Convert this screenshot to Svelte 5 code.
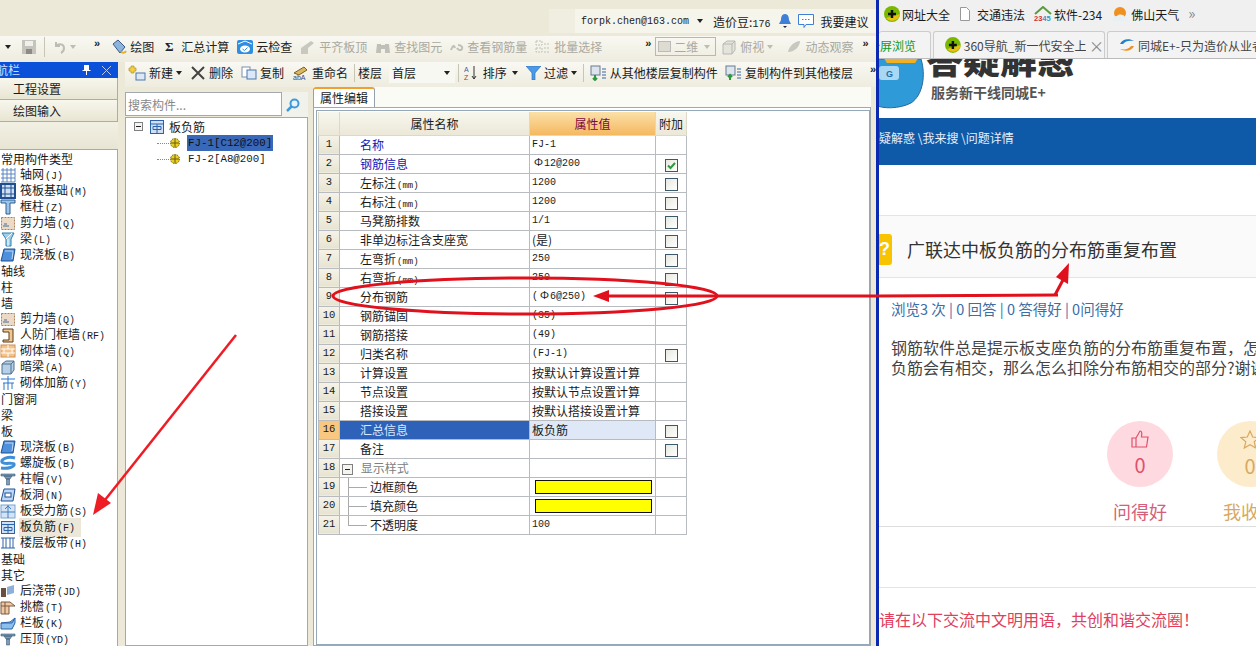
<script>
  const sideItems = [
    { t: '常用构件类型' },
    { t: '轴网', k: '(J)', i: 'grid' },
    { t: '筏板基础', k: '(M)', i: 'raft' },
    { t: '框柱', k: '(Z)', i: 'column' },
    { t: '剪力墙', k: '(Q)', i: 'wall' },
    { t: '梁', k: '(L)', i: 'beam' },
    { t: '现浇板', k: '(B)', i: 'slab' },
    { t: '轴线' },
    { t: '柱' },
    { t: '墙' },
    { t: '剪力墙', k: '(Q)', i: 'wall' },
    { t: '人防门框墙', k: '(RF)', i: 'door' },
    { t: '砌体墙', k: '(Q)', i: 'brick' },
    { t: '暗梁', k: '(A)', i: 'box' },
    { t: '砌体加筋', k: '(Y)', i: 'rebar' },
    { t: '门窗洞' },
    { t: '梁' },
    { t: '板' },
    { t: '现浇板', k: '(B)', i: 'slab' },
    { t: '螺旋板', k: '(B)', i: 'spiral' },
    { t: '柱帽', k: '(V)', i: 'cap' },
    { t: '板洞', k: '(N)', i: 'hole' },
    { t: '板受力筋', k: '(S)', i: 'force' },
    { t: '板负筋', k: '(F)', i: 'neg', active: true },
    { t: '楼层板带', k: '(H)', i: 'band' },
    { t: '基础' },
    { t: '其它' },
    { t: '后浇带', k: '(JD)', i: 'post' },
    { t: '挑檐', k: '(T)', i: 'eave' },
    { t: '栏板', k: '(K)', i: 'rail' },
    { t: '压顶', k: '(YD)', i: 'cap' }
  ];

  const rows = [
    { name: '名称', value: 'FJ-1', blue: true },
    { name: '钢筋信息', value: '12@200', phi: true, blue: true, check: 'on' },
    { name: '左标注', unit: '(mm)', value: '1200', check: 'off' },
    { name: '右标注', unit: '(mm)', value: '1200', check: 'off' },
    { name: '马凳筋排数', value: '1/1', check: 'off' },
    { name: '非单边标注含支座宽', value: '(是)', cn: true, check: 'off' },
    { name: '左弯折', unit: '(mm)', value: '250', check: 'off' },
    { name: '右弯折', unit: '(mm)', value: '250', check: 'off' },
    { name: '分布钢筋', value: '6@250)', pre: '(', phi: true, check: 'off' },
    { name: '钢筋锚固', value: '(35)' },
    { name: '钢筋搭接', value: '(49)' },
    { name: '归类名称', value: '(FJ-1)', check: 'off' },
    { name: '计算设置', value: '按默认计算设置计算', cn: true },
    { name: '节点设置', value: '按默认节点设置计算', cn: true },
    { name: '搭接设置', value: '按默认搭接设置计算', cn: true },
    { name: '汇总信息', value: '板负筋', cn: true, selected: true, check: 'off' },
    { name: '备注', value: '', check: 'off' },
    { name: '显示样式', value: '', group: true },
    { name: '边框颜色', swatch: true, child: true },
    { name: '填充颜色', swatch: true, child: true },
    { name: '不透明度', value: '100', child: true, last: true }
  ];
</script>

{#snippet icon(name)}
  <svg class="ic" viewBox="0 0 16 16" width="16" height="16">
    {#if name === 'grid'}
      <path d="M1 3h14M1 7h14M1 11h14M1 15h14M3 1v14M7 1v14M11 1v14M15 1v14" stroke="#5a86c0" fill="none"/>
    {:else if name === 'raft'}
      <rect x="1" y="1" width="14" height="14" fill="#cfe0f4" stroke="#1f4f90" stroke-width="2"/>
      <path d="M5 1v14M11 1v14M1 5h14M1 11h14" stroke="#1f4f90"/>
    {:else if name === 'column'}
      <path d="M1 1h14v3H10v11H6V4H1z" fill="#9cc4ea" stroke="#2f5f90"/>
    {:else if name === 'wall'}
      <rect x="1.5" y="2.5" width="13" height="12" fill="#ecd9c6" stroke="#a9825a" stroke-dasharray="2 1"/>
      <path d="M3 11h6M4 9h3" stroke="#9aa4b0" stroke-width="2"/>
    {:else if name === 'beam'}
      <path d="M2 2h12l-3 6v7H6V8z" fill="#9fd0ee" stroke="#2f7fa8"/>
      <path d="M6 8l6-6M8 15V8" stroke="#fff"/>
    {:else if name === 'slab'}
      <path d="M4 2h11l-2 12H1z" fill="#4f90dc" stroke="#1f4f90"/>
      <path d="M5 4h8l-1 8" stroke="#bcd8f6" fill="none"/>
    {:else if name === 'door'}
      <path d="M3 2h10v13H3v-2h6V5H3z" fill="#f2c890" stroke="#5a3a18"/>
    {:else if name === 'brick'}
      <rect x="1" y="2" width="14" height="12" fill="#f4c48c" stroke="#d09050"/>
      <path d="M1 6h14M1 10h14M8 2v4M4 6v4M12 6v4M8 10v4" stroke="#fff"/>
    {:else if name === 'box'}
      <path d="M2 5l4-3h8v9l-3 4H2z" fill="#b6d0e8" stroke="#50708c"/>
      <path d="M2 5h9v10M11 5l3-3" stroke="#50708c" fill="none"/>
    {:else if name === 'rebar'}
      <path d="M1 4h14M8 1v14M3 8h11M4 8v7M12 8v6" stroke="#2a78c8" fill="none"/>
    {:else if name === 'spiral'}
      <path d="M15 3C8 1 1 4 2 7c1 3 11 0 12 2 1 3-6 5-13 4" stroke="#3f8ed8" stroke-width="3" fill="none"/>
    {:else if name === 'cap'}
      <path d="M1 3h14v2H1zM4 5h8l-2 3H6zM6.5 8h3v6h-3z" fill="#7e9cb8" stroke="#3a5a78" stroke-width=".6"/>
    {:else if name === 'hole'}
      <path d="M4 2h11l-2 12H1z" fill="#bcd8f6" stroke="#1f4f90"/>
      <rect x="5" y="6" width="6" height="4" fill="#fff" stroke="#1f4f90"/>
    {:else if name === 'force'}
      <rect x="1" y="2" width="14" height="13" fill="#d4e4f6" stroke="#7ea6d0"/>
      <path d="M8 2v13M1 9h14M5 6l3-3 3 3" stroke="#3f7ec0" fill="none"/>
    {:else if name === 'neg'}
      <rect x="1.5" y="2.5" width="13" height="12" fill="#cfe0f6" stroke="#2c62a8"/>
      <path d="M1.5 5.500h13M8 5.500v9M4 8.500h8v3H4z" stroke="#2c62a8" fill="none"/>
    {:else if name === 'band'}
      <path d="M1 3h14M1 13h14M3 3v10M6 3v10M10 3v10M13 3v10" stroke="#2c62a8" fill="none"/>
    {:else if name === 'post'}
      <rect x="1" y="5" width="5" height="9" fill="#6a5040"/>
      <path d="M7 4l7-2v8l-7 2z" fill="#8cb0d8"/>
    {:else if name === 'eave'}
      <path d="M1 3h9l5 4H9v8H1z" fill="#f0c8a4" stroke="#7a5a40"/>
      <path d="M1 7h8M5 3v12" stroke="#7a5a40"/>
    {:else if name === 'rail'}
      <path d="M1 8l9-1 5-4v5l-3 6H1z" fill="#8cc0ec" stroke="#2c62a8"/>
      <path d="M1 8h11l3-5" stroke="#2c62a8" fill="none"/>
    {/if}
  </svg>
{/snippet}

{#snippet caret()}
  <span class="caret"></span>
{/snippet}

<div class="screen">
  <div class="app">
    <div class="titlebar">
      <div class="account-gap"></div>
      <div class="account">
        <span class="mono">forpk.chen@163.com</span>
        {@render caret()}
        <span class="bean">造价豆:<span class="mono">176</span></span>
        <svg width="14" height="16" viewBox="0 0 14 16"><path d="M7 1c3 0 4 3 4 6l2 4H1l2-4c0-3 1-6 4-6z" fill="#3f7fd8"/><path d="M5 13h4l-2 2z" fill="#224"/></svg>
        <svg width="18" height="16" viewBox="0 0 18 16"><path d="M1.5 1.500h15v10H9l-2 3v-3H1.500z" fill="#fff" stroke="#3f7fd8"/><path d="M5 6.500h8" stroke="#3f7fd8" stroke-dasharray="1.500 1.500"/></svg>
        <span>我要建议</span>
      </div>
    </div>

    <div class="toolbar main-tools">
      {@render caret()}
      <svg class="tool save" width="16" height="16" viewBox="0 0 16 16"><rect x="1" y="1" width="14" height="14" fill="#c4c4bc"/><rect x="4" y="2" width="8" height="5" fill="#f0f0ea"/><rect x="5" y="10" width="6" height="5" fill="#8c8c86"/></svg>
      <span class="sep"></span>
      <svg class="tool undo" width="14" height="14" viewBox="0 0 14 14"><path d="M3 2v4h4M3 6c3-3 8-2 8 2 0 2-1 4-3 5" stroke="#bdbdb5" stroke-width="2" fill="none"/></svg>
      <span class="caret dim"></span>
      <span class="more first-more">»</span>
      <span class="tb"><svg width="16" height="16" viewBox="0 0 16 16"><path d="M2 5l5-4 7 7-5 6z" fill="#8cb4dc" stroke="#3a5a88"/><path d="M10 13c2 1 4 1 5-1" stroke="#e8b020" stroke-width="2" fill="none"/></svg>绘图</span>
      <span class="tb"><b class="sigma">Σ</b>汇总计算</span>
      <span class="tb"><svg width="16" height="16" viewBox="0 0 16 16"><rect x="0" y="1" width="16" height="14" rx="2" fill="#2f8ee0"/><path d="M1 5l7-3 7 3" stroke="#fff" fill="none"/><ellipse cx="8" cy="10" rx="5" ry="3.500" fill="#fff"/><path d="M5.500 10l2 1.500 3-3" stroke="#2f8ee0" fill="none"/></svg>云检查</span>
      <span class="tb off"><svg width="16" height="16" viewBox="0 0 16 16"><path d="M1 9l10-7 3 2-6 5v6H1z" fill="#c8c8c0"/></svg>平齐板顶</span>
      <span class="tb off"><svg width="16" height="16" viewBox="0 0 16 16"><path d="M2 5h4v9H1zM10 5h4l1 9h-5zM6 6h4v4H6z" fill="#c0c0b8"/></svg>查找图元</span>
      <span class="tb off"><svg width="14" height="12" viewBox="0 0 14 12"><path d="M1 9c2-5 3-5 4-2M8 4c3 0 5 2 4 4s-4 1-5-1" stroke="#c0c0b8" stroke-width="2" fill="none"/></svg>查看钢筋量</span>
      <span class="tb off"><svg width="16" height="16" viewBox="0 0 16 16"><path d="M1 2h6v4H1zM9 5h6M9 9h6M9 13h6M1 9h6v4H1z" fill="none" stroke="#c0c0b8" stroke-dasharray="2 1"/></svg>批量选择</span>
      <span class="more mid-more">»</span>
      <span class="combo off"><span class="swatch-2d"></span>二维<span class="caret dim"></span></span>
      <span class="tb off view"><svg width="16" height="16" viewBox="0 0 16 16"><path d="M2 5l4-3h8v9l-3 4H2zM2 5h9v10M11 5l3-3" fill="#e4e4dc" stroke="#b8b8b0"/></svg>俯视<span class="caret dim"></span></span>
      <span class="tb off"><svg width="16" height="16" viewBox="0 0 16 16"><path d="M2 13C3 7 9 2 14 2c0 5-5 11-12 11z" fill="#c8c8c0"/></svg>动态观察</span>
      <span class="more end-more">»</span>
    </div>

    <div class="workspace">
      <aside class="side">
        <div class="side-title"><span class="clip">导航栏</span>
          <span class="pin">
            <svg width="9" height="10" viewBox="0 0 9 10"><path d="M2 0h5v5h1.500v1H5v4H4V6H.5V5H2z" fill="#fff"/></svg>
            <svg width="9" height="9" viewBox="0 0 9 9"><path d="M0 0l9 9M9 0L0 9" stroke="#b8c8f0"/></svg>
          </span>
        </div>
        <div class="side-btn">工程设置</div>
        <div class="side-btn">绘图输入</div>
        <div class="side-blank"></div>
        <div class="side-list">
          {#each sideItems as it}
            <div class="side-item" class:has-icon={it.i} class:active={it.active}>
              {#if it.i}{@render icon(it.i)}{/if}
              <span class="side-label">{it.t}{#if it.k}<span class="mono key">{it.k}</span>{/if}</span>
            </div>
          {/each}
        </div>
      </aside>

      <main class="content">
        <div class="toolbar sub-tools">
          <span class="tb"><svg width="18" height="16" viewBox="0 0 18 16"><path d="M3 1h3v2h2v3H6v2H3V6H1V3h2z" fill="#f0d040" stroke="#a88820" stroke-width=".6"/><rect x="8" y="8" width="9" height="7" fill="#dce8f6" stroke="#4a78b0"/></svg>新建{@render caret()}</span>
          <span class="tb m8"><svg class="x-ic" width="14" height="14" viewBox="0 0 14 14"><path d="M1 1l12 12M13 1L1 13" stroke="#444" stroke-width="2"/></svg>删除</span>
          <span class="tb m9"><svg width="16" height="14" viewBox="0 0 16 14"><rect x="1" y="1" width="8" height="10" fill="#fff" stroke="#7a90b0"/><rect x="6" y="4" width="9" height="9" fill="#dce8f6" stroke="#4a78b0"/></svg>复制</span>
          <span class="tb"><svg width="16" height="16" viewBox="0 0 16 16"><path d="M1 8l10-6 3 3-8 5z" fill="#d8b860" stroke="#806020"/><text x="0" y="15" font-size="7" fill="#447" font-family="Liberation Sans">abA</text></svg>重命名</span>
          <span class="vsep"></span>
          <span class="floor-label">楼层</span>
          <span class="floor-select">首层<span class="caret"></span></span>
          <span class="vsep"></span>
          <span class="tb sort"><svg width="14" height="16" viewBox="0 0 14 16"><text x="0" y="7" font-size="7" fill="#3a62a8" font-family="Liberation Sans">A</text><text x="0" y="15" font-size="7" fill="#a04040" font-family="Liberation Sans">Z</text><path d="M10 1v13M8 11l2 3 2-3" stroke="#333" fill="none"/></svg>排序{@render caret()}</span>
          <span class="tb m3"><svg width="15" height="14" viewBox="0 0 15 14"><path d="M0 0h15L9 7v7H6V7z" fill="#4a9ae8" stroke="#2a6ab0" stroke-width=".6"/></svg>过滤{@render caret()}</span>
          <span class="vsep"></span>
          <span class="tb copy-from"><svg width="17" height="16" viewBox="0 0 17 16"><rect x="1" y="1" width="9" height="9" fill="#dce4ee" stroke="#6a7a90"/><path d="M5 10v5M3 13l2 2 2-2" stroke="#2a9a3a" stroke-width="2" fill="none"/><path d="M12 4h4M12 7h4M12 10h4M12 13h4" stroke="#3a62a8"/></svg>从其他楼层复制构件</span>
          <span class="tb"><svg width="17" height="16" viewBox="0 0 17 16"><rect x="1" y="1" width="9" height="9" fill="#dce4ee" stroke="#6a7a90"/><path d="M5 10v5M3 12l2-2 2 2" stroke="#2a9a3a" stroke-width="2" fill="none"/><path d="M12 4h4M12 7h4M12 10h4M12 13h4" stroke="#3a62a8"/></svg>复制构件到其他楼层</span>
          <span class="more sub-more">»</span>
        </div>

        <div class="panes">
          <section class="tree-pane">
            <div class="search">
              <input class="search-input" placeholder="搜索构件..." />
              <span class="search-btn">
                <svg width="16" height="16" viewBox="0 0 16 16"><circle cx="9.500" cy="6.500" r="4" fill="#e8f4fc" stroke="#3f9ad8" stroke-width="2"/><path d="M6.500 9.500L2 14" stroke="#3f9ad8" stroke-width="2.500"/></svg>
              </span>
            </div>
            <div class="tree">
              <div class="tree-root">
                <span class="minus"></span>
                <svg width="14" height="14" viewBox="0 0 14 14"><rect x=".5" y=".5" width="13" height="13" fill="#cfe0f6" stroke="#2c62a8"/><path d="M.5 4h13M7 4v9.500M3 6.500h8v3H3z" stroke="#2c62a8" fill="none"/></svg>
                <span class="tree-name">板负筋</span>
              </div>
              {#each ['FJ-1[C12@200]', 'FJ-2[A8@200]'] as leaf, n}
                <div class="tree-leaf">
                  <span class="dots"></span>
                  <svg width="10" height="10" viewBox="0 0 10 10"><circle cx="5" cy="5" r="4.500" fill="#e8d020" stroke="#6a5a10" stroke-dasharray="1.500 1"/><path d="M1 5h8M5 1v8" stroke="#6a5a10"/></svg>
                  <span class="mono leaf-name" class:picked={n === 0}>{leaf}</span>
                </div>
              {/each}
            </div>
          </section>

          <section class="prop-pane">
            <div class="tabstrip"><span class="tab">属性编辑</span></div>
            <div class="tab-body">
              <div class="grid-box">
                <table>
                  <colgroup><col class="c-no" /><col class="c-name" /><col class="c-val" /><col class="c-add" /></colgroup>
                  <thead>
                    <tr><th></th><th>属性名称</th><th class="val-head">属性值</th><th>附加</th></tr>
                  </thead>
                  <tbody>
                    {#each rows as r, n}
                      <tr class:selected={r.selected}>
                        <td class="no mono">{n + 1}</td>
                        <td class="name" class:blue={r.blue} class:group={r.group} class:child={r.child}>
                          {#if r.group}<span class="minus small"></span>{/if}
                          {#if r.child}<span class="branch" class:end={r.last}></span>{/if}
                          {r.name}{#if r.unit}<span class="mono unit">{r.unit}</span>{/if}
                        </td>
                        <td class="val" class:cn={r.cn}>
                          {#if r.swatch}<div class="yellow"></div>{:else}{r.pre || ''}{#if r.phi}<span class="phi">Ф</span>{/if}{r.value}{/if}
                        </td>
                        <td class="add">
                          {#if r.check}
                            <span class="check">
                              {#if r.check === 'on'}<svg width="11" height="11" viewBox="0 0 11 11"><path d="M2 5.500l2.500 2.500L9 3" stroke="#2a9a3a" stroke-width="2" fill="none"/></svg>{/if}
                            </span>
                          {/if}
                        </td>
                      </tr>
                    {/each}
                  </tbody>
                </table>
              </div>
            </div>
          </section>
        </div>
      </main>
    </div>
  </div>

  <div class="divider"></div>

  <div class="browser">
    <div class="bookmarks">
      <span class="bm"><svg width="16" height="16" viewBox="0 0 16 16"><circle cx="8" cy="8" r="8" fill="#7ab800"/><path d="M2 12a8 8 0 0 0 14-4z" fill="#e8c010"/><path d="M8 4v8M4 8h8" stroke="#111" stroke-width="2.500"/></svg>网址大全</span>
      <span class="bm doc"><svg width="12" height="14" viewBox="0 0 12 14"><path d="M1.500.5h6l3 3v10h-9z" fill="#fff" stroke="#999"/></svg>交通违法</span>
      <span class="bm"><svg width="18" height="16" viewBox="0 0 18 16"><path d="M1 8l8-7 8 7" stroke="#5a9a40" stroke-width="2" fill="none"/><text x="0" y="15" font-size="7.500" font-weight="700" font-family="Liberation Sans" fill="#c33">23<tspan fill="#39c">45</tspan></text></svg>软件-234</span>
      <span class="bm"><svg width="18" height="16" viewBox="0 0 18 16"><circle cx="9" cy="7" r="6" fill="#f09020"/><path d="M1 15c0-4 3-5 5-5 2-2 6-2 8 1 3 0 3 4 3 4z" fill="#e8f0f4"/></svg>佛山天气</span>
      <span class="bm-more">»</span>
    </div>
    <div class="tabs">
      <span class="btab green"><span class="clip-left">全屏浏览</span></span>
      <span class="btab mid"><svg width="16" height="16" viewBox="0 0 16 16"><circle cx="8" cy="8" r="8" fill="#7ab800"/><path d="M2 12a8 8 0 0 0 14-4z" fill="#e8c010"/><path d="M8 4v8M4 8h8" stroke="#111" stroke-width="2.500"/></svg><span class="tabtxt">360导航_新一代安全上</span><span class="x">×</span></span>
      <span class="btab last"><svg width="16" height="14" viewBox="0 0 16 14"><path d="M1 6C3 1 10 0 15 3 10 2 6 3 4 6z" fill="#1f7fc8"/><path d="M15 8c-2 5-9 6-14 3 5 1 9 0 11-3z" fill="#f09020"/></svg>同城E+-只为造价从业者</span>
    </div>
    <div class="page">
      <div class="logo">
        <svg class="mascot" width="46" height="50" viewBox="0 0 46 50"><path d="M-4 0H42C47 16 44 36 32 44 20 50 4 50-4 46z" fill="#2e9ad8" stroke="#2a6a9a"/><path d="M4-2h36l-4 6H8z" fill="#f0b020"/><rect x="0" y="7" width="20" height="14" rx="3" fill="#a8d8f4"/><text x="7" y="18" font-size="9" font-weight="700" font-family="Liberation Sans" fill="#1f6fa8">G</text></svg>
        <div class="logo-text">
          <div class="logo-big">答疑解惑</div>
          <div class="logo-sub">服务新干线同城E+</div>
        </div>
      </div>
      <div class="crumbs"><span class="crumb-clip">答疑解惑</span> \我来搜 \问题详情</div>
      <div class="question">
        <span class="qmark">?</span>
        <h1>广联达中板负筋的分布筋重复布置</h1>
      </div>
      <div class="stats">浏览3 次 | 0 回答 | 0 答得好 | 0问得好</div>
      <div class="body-text">
        <p>钢筋软件总是提示板支座负筋的分布筋重复布置，怎么处理才能解决这个问题呢</p>
        <p>负筋会有相交，那么怎么扣除分布筋相交的部分?谢谢大家的帮助</p>
      </div>
      <div class="votes">
        <div class="vote pink">
          <span class="circle">
            <svg width="18" height="18" viewBox="0 0 18 18"><path d="M1 8h4v9H1zM5 8l4-7c2 0 2 2 1.500 6H17l-1.500 10H5" fill="none" stroke="currentColor" stroke-width="1.200"/></svg>
            <span class="count">0</span>
          </span>
          <span class="vote-label">问得好</span>
        </div>
        <div class="vote amber">
          <span class="circle">
            <svg width="20" height="19" viewBox="0 0 20 19"><path d="M10 1l2.700 6 6.300.6-4.800 4.200 1.500 6.200L10 14.700 4.300 18l1.500-6.200L1 7.600 7.300 7z" fill="none" stroke="currentColor" stroke-width="1.200"/></svg>
            <span class="count">0</span>
          </span>
          <span class="vote-label">我收藏</span>
        </div>
      </div>
      <div class="notice">请在以下交流中文明用语，共创和谐交流圈！</div>
    </div>
  </div>

  <svg class="marks" width="1256" height="646" viewBox="0 0 1256 646">
    <ellipse cx="525" cy="296" rx="192" ry="18" fill="none" stroke="#e0101c" stroke-width="3" />
    <path d="M236 335L101 505" stroke="#ee1c25" stroke-width="2.500" fill="none" />
    <path d="M93 515l5-22 13 10z" fill="#ee1c25" />
    <path d="M605 296H878L1058 295" stroke="#e0101c" stroke-width="3" fill="none" />
    <path d="M593 296l16-6v12z" fill="#e0101c" />
    <path d="M1055 295l9-17" stroke="#e0101c" stroke-width="3" fill="none" />
    <path d="M1069 263l-1 21-12-7z" fill="#e0101c" />
  </svg>
</div>

<style>
  :global(body) {
    margin: 0;
    overflow: hidden;
  }
  .screen {
    position: relative;
    display: flex;
    width: 1256px;
    height: 646px;
    overflow: hidden;
    background: #fff;
    font-family: "Noto Sans CJK SC", "Liberation Sans", sans-serif;
    font-size: 12px;
    color: #1a1a1a;
  }
  .mono {
    font-family: "Liberation Mono", "Noto Sans CJK SC", monospace;
  }
  .app {
    width: 876px;
    flex: none;
    display: flex;
    flex-direction: column;
    background: #ece9d8;
  }
  .titlebar {
    height: 36px;
    flex: none;
    display: flex;
    justify-content: flex-end;
    padding-top: 9px;
    box-sizing: border-box;
  }
  .account-gap {
    width: 26px;
    height: 24px;
    background: #f0eee0;
  }
  .account {
    width: 301px;
    height: 24px;
    padding: 0 6px;
    box-sizing: border-box;
    display: flex;
    align-items: center;
    gap: 5px;
    background: #f6f5ec;
    white-space: nowrap;
  }
  .account .mono {
    font-size: 10px;
  }
  .bean {
    margin: 0 3px 0 2px;
  }
  .caret {
    display: inline-block;
    width: 0;
    height: 0;
    border: 3px solid transparent;
    border-top: 4px solid #222;
    border-bottom: 0;
    margin: 0 3px;
  }
  .caret.dim {
    border-top-color: #bdbdb5;
  }
  .tb .caret {
    margin-left: 0;
  }
  .toolbar {
    display: flex;
    align-items: center;
    white-space: nowrap;
    background: linear-gradient(#f9f8f2, #eeecdf);
    overflow: hidden;
    box-sizing: border-box;
  }
  .main-tools {
    height: 26px;
    flex: none;
    padding: 0 0 5px 2px;
    color: #222;
  }
  .tool.save {
    margin-left: 7px;
  }
  .tool.undo {
    margin-left: 8px;
  }
  .sep {
    width: 1px;
    height: 20px;
    background: #c8c5b4;
    margin-left: 7px;
  }
  .more {
    font: 700 11px "Liberation Sans", sans-serif;
    margin-top: -8px;
    color: #222;
  }
  .first-more {
    margin-left: 15px;
    margin-right: 11px;
  }
  .mid-more {
    margin-left: 35px;
  }
  .end-more {
    margin-left: 1px;
  }
  .tb {
    display: inline-flex;
    align-items: center;
    gap: 3px;
    margin-right: 8px;
  }
  .tb.off {
    color: #aaa9a0;
  }
  .tb.view {
    margin-right: 10px;
  }
  .sigma {
    font: 700 13px "Liberation Serif", serif;
    width: 14px;
    text-align: center;
    margin-right: 2px;
  }
  .combo {
    display: inline-flex;
    align-items: center;
    gap: 3px;
    width: 61px;
    height: 19px;
    margin: 0 5px 0 4px;
    padding: 0 2px;
    box-sizing: border-box;
    border: 1px solid #b8b8b0;
    color: #aaa9a0;
  }
  .swatch-2d {
    width: 13px;
    height: 9px;
    background: #dedcd0;
    border: 1px solid #bbb;
  }
  .workspace {
    flex: 1;
    min-height: 0;
    display: flex;
  }
  .side {
    width: 118px;
    flex: none;
    display: flex;
    flex-direction: column;
  }
  .side-title {
    height: 16px;
    flex: none;
    display: flex;
    align-items: center;
    justify-content: space-between;
    background: #0a50d8;
    color: #cfe0ff;
    padding-right: 7px;
    overflow: hidden;
  }
  .clip {
    margin-left: -16px;
    line-height: 16px;
  }
  .pin {
    display: flex;
    align-items: center;
    gap: 11px;
  }
  .side-btn {
    height: 22px;
    flex: none;
    box-sizing: border-box;
    padding-left: 13px;
    line-height: 21px;
    border: 1px solid #b0ad9c;
    border-left: 0;
    border-top: 0;
    background: linear-gradient(#f8f7ee, #e8e5d2);
  }
  .side-blank {
    height: 27px;
    flex: none;
    background: linear-gradient(#f2f0e4, #e8e5d4);
  }
  .side-list {
    flex: 1;
    min-height: 0;
    background: #fff;
    border: 1px solid #a4a9b0;
    border-left: 0;
    border-bottom: 0;
    padding-top: 1px;
    overflow: hidden;
  }
  .side-item {
    height: 16px;
    line-height: 16px;
    display: flex;
    align-items: center;
    padding-left: 1px;
    white-space: nowrap;
  }
  .side-item.has-icon {
    padding-left: 0;
    gap: 4px;
  }
  .ic {
    flex: none;
  }
  .side-label {
    padding: 0 2px 0 0;
  }
  .side-item.active .side-label {
    background: #ebe8da;
    margin-left: -1px;
    padding: 0 3px 0 1px;
    width: 58px;
  }
  .key {
    font-size: 10px;
    margin-left: 1px;
  }
  .content {
    flex: 1;
    min-width: 0;
    margin-left: 7px;
    display: flex;
    flex-direction: column;
  }
  .sub-tools {
    height: 25px;
    flex: none;
    padding: 0 0 4px 3px;
  }
  .sub-tools .tb {
    margin-right: 6px;
  }
  .sub-tools .tb.m3 {
    margin-right: 3px;
  }
  .sub-tools .tb.m8 {
    margin-right: 8px;
  }
  .sub-tools .tb.m9 {
    margin-right: 9px;
  }
  .sub-tools .tb.sort {
    margin: 0 5px 0 2px;
    gap: 5px;
  }
  .sub-tools .tb.copy-from {
    margin: 0 7px 0 3px;
  }
  .x-ic {
    margin-right: 1px;
  }
  .vsep {
    width: 1px;
    height: 18px;
    background: #c8c5b4;
    margin-right: 3px;
  }
  .floor-label {
    margin-right: 7px;
  }
  .floor-select {
    width: 68px;
    height: 21px;
    box-sizing: border-box;
    display: flex;
    justify-content: space-between;
    align-items: center;
    background: #f8f8f2;
    padding: 0 2px 0 3px;
    margin-right: 3px;
  }
  .sub-more {
    margin-left: 11px;
  }
  .panes {
    flex: 1;
    min-height: 0;
    display: flex;
    gap: 5px;
  }
  .tree-pane {
    width: 183px;
    flex: none;
    display: flex;
    flex-direction: column;
    padding-top: 5px;
    box-sizing: border-box;
  }
  .search {
    display: flex;
    height: 25px;
    flex: none;
  }
  .search-input {
    width: 157px;
    height: 24px;
    box-sizing: border-box;
    border: 1px solid #a4a9b0;
    padding: 0 2px;
    font: inherit;
    background: #fff;
  }
  .search-input::placeholder {
    color: #888;
    opacity: 1;
  }
  .search-btn {
    flex: 1;
    display: flex;
    align-items: center;
    justify-content: center;
    background: #f2f2ec;
    padding-right: 5px;
  }
  .tree {
    flex: 1;
    background: #fff;
    border: 1px solid #a4a9b0;
    padding: 0 0 0 8px;
  }
  .tree-root {
    display: flex;
    align-items: center;
    height: 17px;
  }
  .minus {
    position: relative;
    display: inline-block;
    width: 9px;
    height: 9px;
    box-sizing: border-box;
    border: 1px solid #808080;
    background: #f4f4f0;
    margin-right: 7px;
    flex: none;
  }
  .minus::after {
    content: "";
    position: absolute;
    left: 1px;
    top: 3px;
    width: 5px;
    height: 1px;
    background: #222;
  }
  .tree-name {
    margin-left: 5px;
  }
  .tree-leaf {
    display: flex;
    align-items: center;
    height: 16px;
  }
  .dots {
    width: 12px;
    margin-left: 23px;
    margin-right: 1px;
    border-top: 1px dotted #888;
  }
  .leaf-name {
    font-size: 10.800px;
    margin-left: 7px;
    padding: 0 1px;
    line-height: 16px;
    white-space: nowrap;
  }
  .leaf-name.picked {
    background: #3a68b8;
    color: #111;
  }
  .prop-pane {
    flex: 1;
    min-width: 0;
    margin-right: 5px;
    display: flex;
    flex-direction: column;
    background: #fbfbf6;
  }
  .tabstrip {
    height: 20px;
    flex: none;
  }
  .tab {
    display: inline-block;
    height: 20px;
    box-sizing: border-box;
    padding: 0 6px;
    line-height: 18px;
    background: #fff;
    border: 1px solid #94a0ac;
    border-bottom: 0;
    border-top: 2px solid #f0a030;
    border-radius: 3px 3px 0 0;
  }
  .tab-body {
    flex: 1;
    min-height: 0;
    box-sizing: border-box;
    background: #fff;
    border: 1px solid #a0a8b0;
    padding: 2px 0 0 2px;
    display: flex;
  }
  .grid-box {
    flex: 1;
    border: 1px solid #94a8ba;
    padding: 1px 0 0 1px;
  }
  table {
    table-layout: fixed;
    width: 368px;
    border-collapse: collapse;
  }
  .c-no { width: 21px; }
  .c-name { width: 190px; }
  .c-val { width: 126px; }
  .c-add { width: 31px; }
  th {
    height: 23px;
    padding: 0;
    box-sizing: border-box;
    font-weight: 400;
    background: linear-gradient(#f8f7ee, #ebe8d8);
    border: 1px solid #dcd9c8;
    border-top: 0;
  }
  th.val-head {
    background: linear-gradient(#fbe0a8, #f4b860);
    color: #7a0a40;
  }
  td {
    height: 19px;
    padding: 0;
    box-sizing: border-box;
    border: 1px solid #b8bcc0;
    white-space: nowrap;
    overflow: hidden;
    line-height: 17px;
  }
  .no {
    text-align: center;
    font-size: 10.500px;
    background: linear-gradient(#f6f4e8, #e6e3d2);
  }
  .name {
    padding-left: 20px;
  }
  .name.blue {
    color: #1414b4;
  }
  .name.group {
    padding-left: 2px;
    color: #808080;
  }
  .name.child {
    padding-left: 30px;
    position: relative;
  }
  .unit {
    font-size: 9px;
    line-height: 9px;
    margin-left: 1px;
  }
  .minus.small {
    margin: 0 5px 0 0;
    width: 11px;
    height: 11px;
    vertical-align: -2px;
  }
  .minus.small::after {
    left: 2px;
    top: 4px;
  }
  .branch {
    position: absolute;
    left: 8px;
    top: -2px;
    width: 18px;
    height: 11px;
    border-left: 1px solid #aaa;
    border-bottom: 1px solid #aaa;
  }
  .branch:not(.end) {
    height: 20px;
    border-bottom: 0;
  }
  .branch:not(.end)::after {
    content: "";
    position: absolute;
    left: 0;
    top: 11px;
    width: 18px;
    height: 1px;
    background: #aaa;
  }
  .val {
    padding-left: 2px;
    font-family: "Liberation Mono", "Noto Sans CJK SC", monospace;
    font-size: 10px;
  }
  .val.cn {
    font-family: "Noto Sans CJK SC", sans-serif;
    font-size: 12px;
  }
  .phi {
    font-family: "Noto Sans CJK SC", sans-serif;
    font-size: 11px;
    line-height: 10px;
    margin: 0 1px 0 2px;
  }
  .selected .no {
    background: #f8c880;
  }
  .selected .name {
    background: #2e62b8;
    color: #dce8ff;
  }
  .selected .val {
    background: #dfe8f6;
  }
  .yellow {
    width: 115px;
    height: 12px;
    margin-left: 3px;
    background: #ffff00;
    border: 1px solid #111;
  }
  .add {
    text-align: center;
  }
  .check {
    display: inline-flex;
    align-items: center;
    justify-content: center;
    width: 13px;
    height: 13px;
    box-sizing: border-box;
    vertical-align: middle;
    border: 1px solid #3a5a6c;
    background: linear-gradient(135deg, #e8e8e0, #fff);
  }
  .divider {
    width: 3px;
    flex: none;
    background: #0a28b0;
  }
  .browser {
    flex: 1;
    min-width: 0;
    display: flex;
    flex-direction: column;
    overflow: hidden;
  }
  .bookmarks {
    height: 28px;
    flex: none;
    display: flex;
    align-items: center;
    gap: 9px;
    padding-left: 5px;
    background: #f0f0f0;
    white-space: nowrap;
  }
  .bm {
    display: inline-flex;
    align-items: center;
    gap: 2px;
  }
  .bm.doc {
    gap: 6px;
  }
  .bm-more {
    font-size: 15px;
    color: #888;
    margin-top: -3px;
  }
  .tabs {
    height: 31px;
    flex: none;
    display: flex;
    align-items: flex-end;
    gap: 2px;
    background: #f0f0f0;
    border-bottom: 1px solid #bbb;
    box-sizing: border-box;
    overflow: hidden;
    white-space: nowrap;
  }
  .btab {
    height: 27px;
    box-sizing: border-box;
    display: flex;
    align-items: center;
    gap: 3px;
    flex: none;
    background: #f3f3f3;
    border: 1px solid #ccc;
    border-bottom: 0;
    border-radius: 3px 3px 0 0;
    color: #444;
  }
  .btab.green {
    width: 52px;
    color: #0a9a2a;
    overflow: hidden;
    border-left: 0;
  }
  .clip-left {
    margin-left: -11px;
  }
  .btab.mid {
    width: 172px;
    padding-left: 11px;
  }
  .tabtxt {
    width: 124px;
    overflow: hidden;
  }
  .x {
    font-size: 15px;
    color: #888;
    line-height: 1;
  }
  .btab.last {
    width: 200px;
    padding-left: 11px;
  }
  .page {
    flex: 1;
    min-height: 0;
    background: #fff;
    overflow: hidden;
  }
  .logo {
    height: 59px;
    display: flex;
    overflow: hidden;
  }
  .mascot {
    flex: none;
  }
  .logo-text {
    margin-left: 3px;
    color: #444;
  }
  .logo-big {
    font-size: 37px;
    line-height: 40px;
    font-weight: 900;
    margin: -21px 0 0 -2px;
    color: #333;
    white-space: nowrap;
  }
  .logo-sub {
    font-size: 14px;
    font-weight: 700;
    line-height: 20px;
    margin: 4px 0 0 3px;
    color: #555;
  }
  .crumbs {
    height: 47px;
    line-height: 40px;
    background: #0e5aa8;
    color: #e8f0fa;
    white-space: nowrap;
    overflow: hidden;
  }
  .crumb-clip {
    margin-left: -12px;
  }
  .question {
    height: 63px;
    margin-top: 50px;
    display: flex;
    align-items: center;
    box-sizing: border-box;
    background: #fafafa;
    border-top: 1px solid #e4e4e4;
    border-bottom: 1px solid #e4e4e4;
    overflow: hidden;
  }
  .qmark {
    width: 20px;
    height: 31px;
    margin: 5px 0 0 -7px;
    flex: none;
    display: flex;
    align-items: center;
    justify-content: flex-end;
    padding-right: 2px;
    box-sizing: border-box;
    border-radius: 3px;
    background: #f8c400;
    color: #fff;
    font: 700 18px "Liberation Sans", sans-serif;
  }
  h1 {
    margin: 5px 0 0 15px;
    font-size: 18px;
    font-weight: 400;
    color: #333;
    white-space: nowrap;
  }
  .stats {
    margin: 21px 0 0 12px;
    line-height: 20px;
    font-size: 14.500px;
    color: #3a6ea8;
    white-space: nowrap;
  }
  .body-text {
    margin: 18px 0 0 12px;
    font-size: 16px;
    line-height: 20px;
    color: #444;
    white-space: nowrap;
  }
  .body-text p {
    margin: 0;
  }
  .votes {
    display: flex;
    gap: 44px;
    margin-top: 44px;
    padding-left: 228px;
    height: 105px;
    box-sizing: content-box;
    border-bottom: 1px solid #ddd;
    overflow: hidden;
  }
  .vote {
    width: 66px;
    flex: none;
    display: flex;
    flex-direction: column;
    align-items: center;
  }
  .circle {
    width: 66px;
    height: 66px;
    flex: none;
    border-radius: 50%;
    display: flex;
    flex-direction: column;
    align-items: center;
    padding-top: 9px;
    box-sizing: border-box;
  }
  .count {
    font-size: 20px;
    line-height: 26px;
    margin-top: 4px;
  }
  .vote-label {
    font-size: 18px;
    line-height: 24px;
    margin-top: 12px;
    white-space: nowrap;
  }
  .pink .circle {
    background: #ffd9e0;
    color: #e0506c;
  }
  .pink .vote-label {
    color: #d4607a;
  }
  .amber .circle {
    background: #fdeccc;
    color: #d8a860;
  }
  .amber .vote-label {
    color: #d8a860;
  }
  .notice {
    margin-top: 60px;
    padding-top: 19px;
    color: #e0405c;
    font-size: 16px;
    line-height: 24px;
    white-space: nowrap;
    border-top: 1px solid #e4e4e4;
  }
  .marks {
    position: absolute;
    left: 0;
    top: 0;
    pointer-events: none;
  }
</style>
